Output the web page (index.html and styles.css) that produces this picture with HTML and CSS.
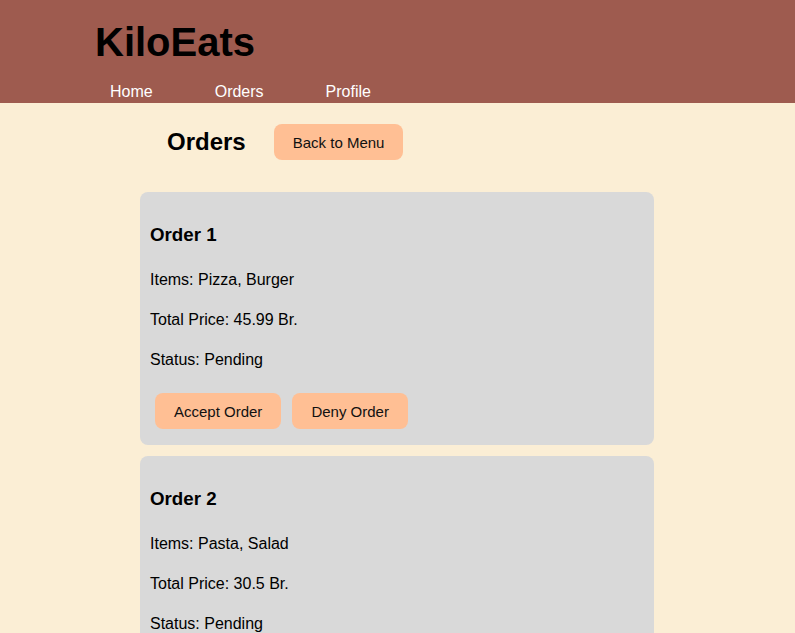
FILE: index.html
```html
<!DOCTYPE html>
<html>
<head>
<meta charset="utf-8">
<title>KiloEats - Orders</title>
<link rel="stylesheet" href="styles.css">
</head>
<body>
<header class="site-header">
  <h1 class="logo">KiloEats</h1>
  <nav class="nav">
    <a href="#" class="nav-link">Home</a>
    <a href="#" class="nav-link">Orders</a>
    <a href="#" class="nav-link">Profile</a>
  </nav>
</header>
<main class="main">
  <div class="page-head">
    <h2 class="page-title">Orders</h2>
    <button class="btn">Back to Menu</button>
  </div>
  <section class="orders">
    <div class="order-card">
      <h3 class="order-title">Order 1</h3>
      <p class="order-line">Items: Pizza, Burger</p>
      <p class="order-line">Total Price: 45.99 Br.</p>
      <p class="order-line">Status: Pending</p>
      <div class="actions">
        <button class="btn">Accept Order</button>
        <button class="btn">Deny Order</button>
      </div>
    </div>
    <div class="order-card">
      <h3 class="order-title">Order 2</h3>
      <p class="order-line">Items: Pasta, Salad</p>
      <p class="order-line">Total Price: 30.5 Br.</p>
      <p class="order-line">Status: Pending</p>
      <div class="actions">
        <button class="btn">Accept Order</button>
        <button class="btn">Deny Order</button>
      </div>
    </div>
  </section>
</main>
</body>
</html>
```

FILE: styles.css
```css
* { box-sizing: border-box; }
body {
  margin: 0;
  background: #fbeed5;
  font-family: "Liberation Sans", Arial, sans-serif;
  color: #000;
}
.site-header {
  background: #9e5b4f;
  height: 103px;
  padding: 19px 0 0 95px;
  display: flex;
  flex-direction: column;
}
.logo {
  margin: 0;
  font-size: 40px;
  line-height: 46px;
  font-weight: bold;
}
.nav {
  display: flex;
  gap: 62px;
  padding-left: 15px;
  margin-top: 18px;
}
.nav-link {
  color: #fff;
  text-decoration: none;
  font-size: 16px;
  line-height: 18px;
}
.main {
  display: flex;
  flex-direction: column;
  align-items: flex-start;
}
.page-head {
  display: flex;
  align-items: center;
  gap: 28px;
  padding-left: 167px;
  margin-top: 21px;
}
.page-title {
  margin: 0;
  font-size: 24px;
  font-weight: bold;
}
.btn {
  background: #ffbf94;
  border: none;
  border-radius: 8px;
  font-family: "Liberation Sans", Arial, sans-serif;
  font-size: 15px;
  color: #111;
  padding: 0 19px;
  height: 36px;
  cursor: pointer;
}
.orders {
  margin-top: 32px;
  margin-left: 140px;
  width: 514px;
  display: flex;
  flex-direction: column;
  gap: 11px;
}
.order-card {
  background: #d9d9d9;
  border-radius: 8px;
  padding: 32px 10px 16px 10px;
}
.order-title {
  margin: 0;
  font-size: 18.72px;
  line-height: 22px;
}
.order-line {
  margin: 22px 0 0 0;
  font-size: 16px;
  line-height: 18px;
}
.order-title + .order-line { margin-top: 25px; }
.actions {
  display: flex;
  gap: 11px;
  margin-top: 24px;
  padding-left: 5px;
}
```
